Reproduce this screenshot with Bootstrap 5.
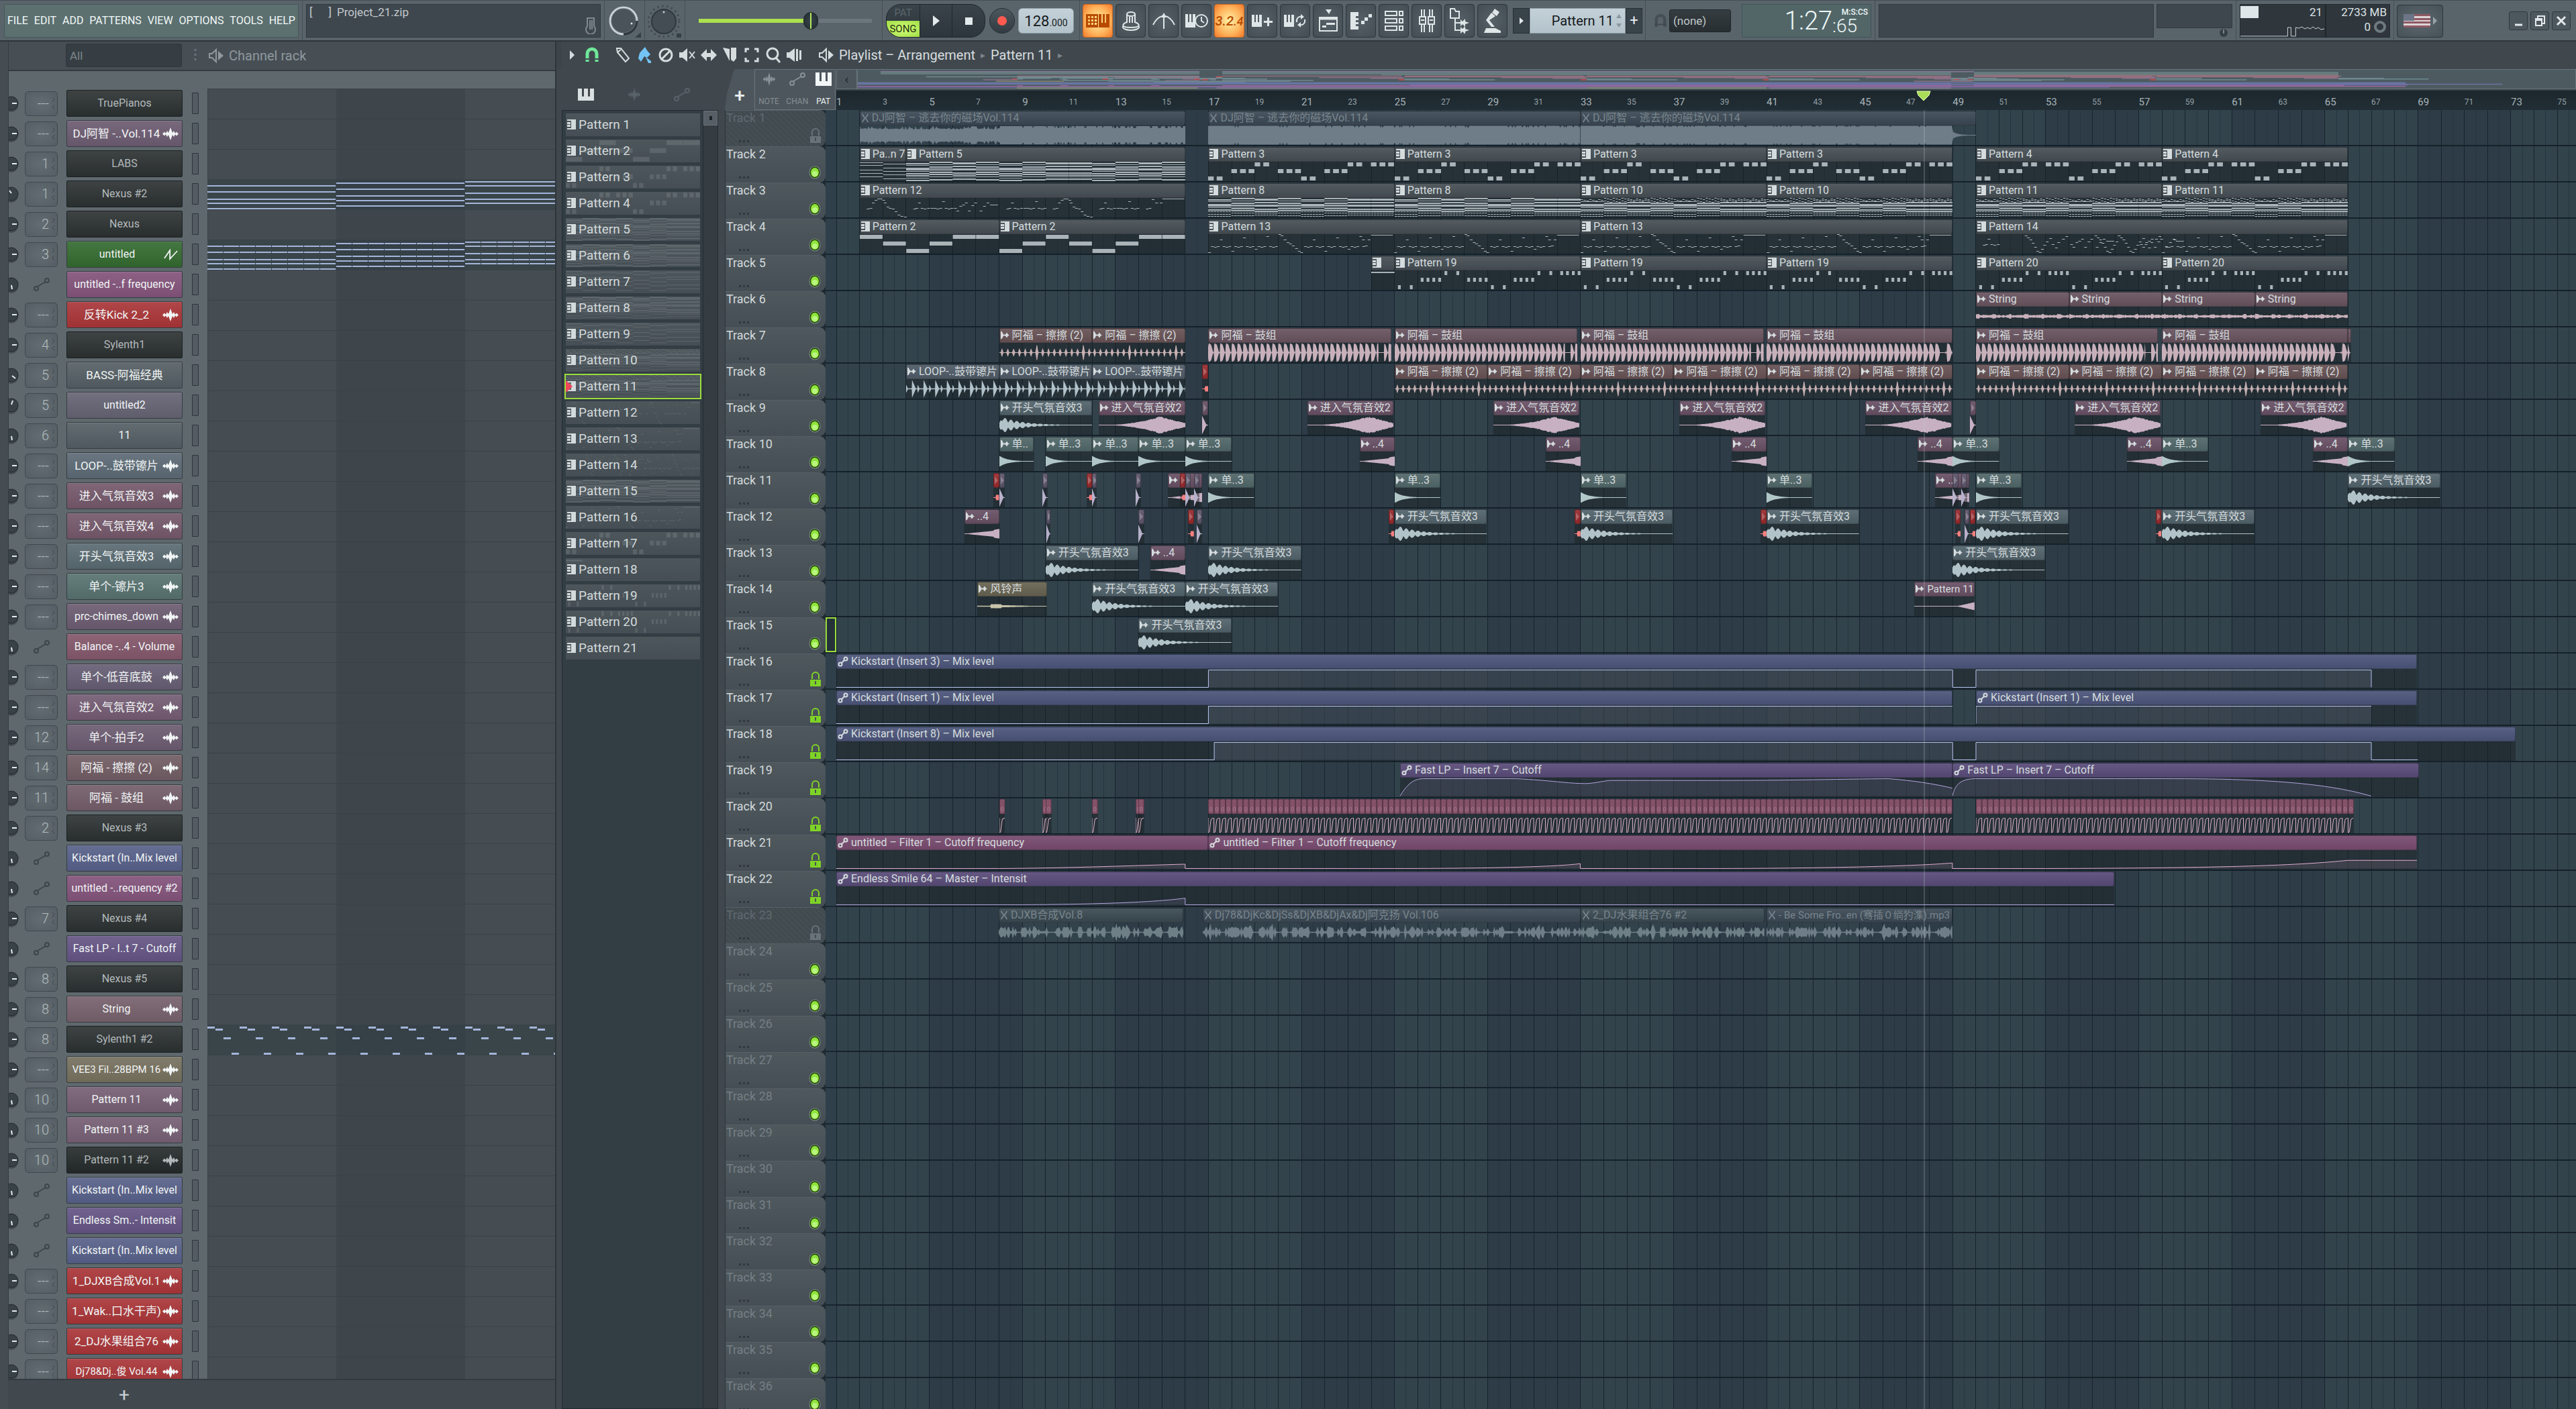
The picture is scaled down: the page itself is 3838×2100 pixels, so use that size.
<!DOCTYPE html>
<html lang="en">
<head>
<meta charset="utf-8">
<meta name="viewport" content="width=device-width, initial-scale=1">
<title>Project_21.zip</title>
<link href="https://cdn.jsdelivr.net/npm/bootstrap@5.3.0/dist/css/bootstrap.min.css" rel="stylesheet">
<style>
body{background:#40484e;color:#cfd6d9;font-family:Roboto,"Noto Sans CJK SC",sans-serif;font-size:16px;line-height:22px}
button,select,input{font-family:inherit}
button{border:0;padding:0;background:none;color:inherit}
svg{display:block;flex:none}
a{color:inherit;text-decoration:none}
/* toolbar */
.toolbar{height:62px;background:#59636a;border-top:1px solid #464e54;border-bottom:2px solid #2e363b;padding:5px 0 4px}
.tb-group{border-right:1px solid #474f56;padding:0 5px;margin:-5px 0 -4px;padding-top:5px;padding-bottom:4px;flex:none}
.tb-group:first-child{padding-left:6px}
.menu-box{width:439px;height:50px;background:#5c7070;border:1px solid #47575a;color:#f2f8f8;font-size:16px}
.well{height:50px;background:#3f474e;border:1px solid #31393f}
.hint-box{width:439px;font-size:17px;color:#c3cacd}
.w60{width:60px}
.vol-group{width:294px}
.vol{appearance:none;width:258px;height:26px;background:none}
.vol::-webkit-slider-runnable-track{height:6px;background:linear-gradient(90deg,#abe04f 64%,#6c757d 64%)}
.vol::-webkit-slider-thumb{appearance:none;width:22px;height:26px;margin-top:-10px;border-radius:11px;border:1px solid #20282c;background:linear-gradient(90deg,transparent 9px,#b5e85c 9px,#b5e85c 11px,transparent 11px),radial-gradient(#39454b,#1f292e)}
.pill{width:148px;height:50px;border-radius:22px;background:linear-gradient(#394349,#2c363b);border:1px solid #1f272b;overflow:hidden}
.pill>div,.pill>button{border-right:1px solid #20282c}
.pat-song{width:50px;font-size:15px;line-height:24px;text-align:center}
.pat-song .on{background:radial-gradient(#d5ff7a,#9fdc45);color:#22300c}
.pat-song .off{color:#5a666c}
.rec{width:38px;height:38px;border-radius:19px;background:linear-gradient(#4c575d,#313b41);border:1px solid #262f34}
.rec i{width:14px;height:14px;border-radius:7px;background:#ff5a4f}
.lcd{background:linear-gradient(#c4d1d9,#b3c2ca);color:#15191b;height:38px;border:1px solid #8c9aa2}
.tempo{width:83px;border-radius:6px;font-size:22px}
.tempo small{font-size:14px}
.tool{width:45px;height:50px;background:radial-gradient(#566067,#434d53);border:1px solid #2d363c;border-radius:4px;color:#dfe6e8}
.tool.hot{background:radial-gradient(#fff3a8,#ffb25a 60%,#f3772a);border-color:#d06a1c;color:#b84a00}
.tool-text{font-size:20px;font-style:italic;font-weight:500}
.side-btn{height:38px;background:#39434a;border:1px solid #262f34;width:25px;color:#e4eaec;font-size:22px}
.pat-lcd{width:143px;font-size:20px}
.dark-select{appearance:none;background:linear-gradient(#363d41,#272d30);border:1px solid #20272b;border-radius:3px;color:#c0c7ca;font-size:17px;padding:0 0 0 5px}
.sel-none{width:92px;height:34px}
.time-box{width:193px;height:50px;background:#526668;border:1px solid #42545a;color:#eef8f8;font-weight:300}
.time-box .big{font-size:38px;line-height:48px}
.time-box .sub{font-size:28px;line-height:28px}
.time-box .unit{font-size:12px;line-height:14px;font-weight:500}
.cpu{width:224px;height:50px;background:#2f373d;border:1px solid #232a2f;color:#dde3e5;font-size:17px}
.cpu-load{width:128px;border-right:2px solid #20272b}
.flag{width:69px;height:49px;background:radial-gradient(#5d686f,#465057);border:1px solid #2d363c;border-radius:4px}
.win{width:28px;height:28px;background:#4d575e;border:1px solid #2f383e;border-radius:3px;color:#e4eaec}
.win-group{width:271px}
/* channel rack */
.rack{width:829px;background:#454d53;border-right:2px solid #2e363b;padding-left:12px;flex:none}
.rack-head{height:44px;border-bottom:2px solid #343c42;border-left:1px solid #343c42;background:#474f55;color:#8f989d;font-size:20px}
.rack-all{width:173px;height:35px;margin-left:85px;background:#363e43;border-color:#2f363b;color:#7d878c}
.rack-body{background:#5f686d;border-left:1px solid #343c42;padding-top:26px;min-height:0;overflow:hidden}
.ch{height:45px}
.ch-num{width:49px;height:37px;border:1px solid #41494f;border-radius:5px;background:radial-gradient(#626c71,#545e64);color:#b4bcbf;font-size:20px;font-weight:300;padding-right:3px}
.ch-auto{width:49px;height:37px;color:#3d464b}
.ch-btn{width:173px;height:40px;margin:0 14px 0 13px;border:1px solid #353d42;border-radius:2px;color:#f1f5f5;font-size:16px;padding:0 5px;background-image:linear-gradient(rgba(255,255,255,.09),rgba(0,0,0,.05));box-shadow:inset 0 1px rgba(255,255,255,.12);white-space:nowrap}
.ch-btn.cjk{font-size:17px}
.ch-btn.fit{font-size:15px}
.ch-btn.dim{color:#b2b9bb;border-color:#1b2123;box-shadow:none}
.ch-led{width:10px;height:32px;border:1px solid #2d353a;background:#535c62;border-radius:1px}
.ch-grid{height:45px;margin-left:13px;border-top:1px solid #3a4248;background:linear-gradient(90deg,#454d53 192px,#3e464c 192px,#3e464c 384px,#454d53 384px);box-shadow:inset 1px 0 #3a4248}
.rack-foot{height:45px;border-top:2px solid #343c42;background:#41494f;font-size:28px;color:#c8ced1;font-weight:500}
.rack-foot button{width:174px;margin-left:86px}
/* playlist */
.pl-head{height:41px;color:#d7dddf;font-size:20px;border-left:8px solid #3d454b}
.pl-head .ti{width:24px;height:24px}
.crumb{color:#7c868b;font-size:14px}
.picker{width:251px;flex:none}
.picker-tabs{height:61px;color:#dbe1e3}
.faint{color:#596268}
.pat-list{margin-left:8px;width:233px;border:1px solid #232b30;background:#333d44;min-height:0;overflow:hidden}
.pat-items{gap:5px;padding:4px 4px 0 5px;width:210px;overflow:hidden}
.pat-item{height:34px;flex:none;background:linear-gradient(#4d565b,#454e54);font-size:19px;color:#d3dadc;text-align:left;padding-left:2px;gap:4px;overflow:hidden}
.pat-item.sel{outline:2px solid #9bdc3c;outline-offset:0}
.pat-item svg.pv{position:absolute;inset:0;width:100%;height:100%;opacity:.13;color:#dfe6e8}
.pat-scroll{width:22px;border-left:1px solid #232b30;background:repeating-conic-gradient(#394147 0 25%,#30383e 0 50%) 0 0/4px 4px}
.pat-scroll div{height:22px;background:#555f65;border:1px solid #6a747a;color:#1c2327}
.corner{width:166px;height:61px;flex:none}
.add-tab{width:44px;background:#4d565c;clip-path:polygon(14px 0,100% 0,100% 100%,0 100%,3px 60%);font-size:28px;font-weight:500;color:#e8edef;padding-top:20px}
.modes{width:121px;background:#4d565c;border:1px solid #6a747a;font-size:12px;line-height:14px;color:#869095}
.modes .on{color:#f2f6f7}
.overview{height:30px;background:#4d5b61;border:1px solid #68737a}
.ov-btn{width:31px;background:#4b555b;border:1px solid #68737a;color:#1b2327;font-size:18px}
.ruler{height:31px;background:linear-gradient(#1c272d,#222e35);border-top:2px solid #37434a;color:#94a0a6;font-size:12px}
.ruler span{position:absolute;bottom:3px;line-height:18px}
.ruler .major{font-size:15px;color:#a9b4b9}
.tracks{min-height:0;overflow:hidden;background:#1d2a32}
.trk{height:54px;position:relative}
.trk-head{width:150px;height:54px;flex:none;background:linear-gradient(#4f585d,#454e54);border-radius:0 9px 9px 0;border-top:1px solid #565f65;border-left:1px solid #2d353a;padding:0 8px 0 1px;font-size:18px;color:#d3dadc;position:relative}
.trk-head.idle{color:#747f85}
.trk-head.off{color:#5f696f;background:repeating-linear-gradient(45deg,#454e53 0 3px,#414a4f 3px 6px)}
.trk-head .dots{position:absolute;left:20px;bottom:6px}
.trk-head .st{position:absolute;right:7px;bottom:5px}
.lead-in{width:16px;flex:none;border-bottom:2px solid #1a262d;background:#30404a}
.lead-in.mark{border:2px solid #9bdc3c;background:#25323a;margin-bottom:2px}
.lane{position:relative;min-width:0;border-bottom:2px solid #15212a}
.grid-svg{position:absolute;left:166px;top:0;height:1944px;width:calc(100% - 166px)}
.clip{position:absolute;top:1px;bottom:0;overflow:hidden}
.clip-head{height:22px;border-radius:3px;border:1px solid rgba(0,0,0,.3);background-image:linear-gradient(rgba(255,255,255,.08),rgba(0,0,0,.06));padding-left:1px;gap:4px;white-space:nowrap;overflow:hidden;color:#d5dcde}
.clip-name{font-size:16px;line-height:20px}
.clip-name.fit{font-size:15px}
.clip svg.body{width:100%;height:29px;background:rgba(26,32,36,.5);position:absolute;left:0;bottom:0}
.clip.ghost .clip-head{color:#78858d}
.clip.ghost svg.body{background:none}
.playhead{position:absolute;top:0;bottom:0;width:2px;background:rgba(190,205,210,.22)}
</style>
<script src="https://cdn.jsdelivr.net/npm/bootstrap@5.3.0/dist/js/bootstrap.bundle.min.js"></script>
</head>
<body class="d-flex flex-column vh-100 overflow-hidden">

<svg width="0" height="0" class="position-absolute">
<defs>
<symbol id="pat" viewBox="0 0 13 15"><path fill="currentColor" d="M8 0h5v15H8zM0 0h8v2H0zM0 4h5v3H0zM0 8h5v3H0zM0 13h8v2H0zM6 0h3v15H6z"/></symbol>
<symbol id="wave" viewBox="0 0 24 26"><path fill="currentColor" d="M0 13l3-4 2 3 2-5 2 4 3-11 3 11 2-4 2 5 2-3 3 4-3 4-2-3-2 5-2-4-3 11-3-11-2 4-2-5-2 3z"/></symbol>
<symbol id="aud" viewBox="0 0 13 14"><path fill="currentColor" d="M0 1l2 1 2 4h3l2-3 2 3 2 1-2 1-2 3-2-3H4l-2 4-2 1z"/></symbol>
<symbol id="auto" viewBox="0 0 24 20"><g fill="none" stroke="currentColor" stroke-width="2"><circle cx="4" cy="16" r="3"/><circle cx="20" cy="4" r="3"/><path d="M6 13L18 6"/></g></symbol>
<symbol id="autos" viewBox="0 0 16 16"><g fill="none" stroke="currentColor" stroke-width="2"><circle cx="4" cy="12" r="2.5"/><circle cx="12" cy="4" r="2.5"/><path d="M6 10l4-4"/></g></symbol>
<symbol id="cut" viewBox="0 0 12 16"><path fill="none" stroke="currentColor" stroke-width="2" d="M1 1l3 5 4 4 3 5M11 1L8 6l-4 4-3 5"/></symbol>
<symbol id="spk" viewBox="0 0 22 24"><path fill="none" stroke="currentColor" stroke-width="2" d="M1 9v6h4l6 6V3L5 9z"/><path fill="currentColor" d="M14 5l8 7-8 7z"/></symbol>
<symbol id="saw" viewBox="0 0 24 18"><path fill="none" stroke="currentColor" stroke-width="2" d="M1 15L10 2v14L22 3"/></symbol>
<symbol id="lock" viewBox="0 0 16 22"><path fill="none" stroke="currentColor" stroke-width="2" d="M3 11V6a5 5 0 0110 0v5"/><path fill="currentColor" fill-rule="evenodd" d="M0 12h16v10H0zM7 14v5h2v-5z"/></symbol>
<symbol id="led" viewBox="0 0 18 20"><ellipse cx="9" cy="10" rx="8.5" ry="9.5" fill="#7f9186"/><ellipse cx="9" cy="10" rx="7.5" ry="8.5" fill="#1f4207"/><ellipse cx="9" cy="10" rx="6" ry="7" fill="#8fe43c"/><ellipse cx="9" cy="12" rx="4" ry="4" fill="#b9f57f"/></symbol>
<symbol id="magnet" viewBox="0 0 20 24"><path fill="none" stroke="currentColor" stroke-width="5" d="M3 22V10a7 7 0 0114 0v12"/><path stroke="#40484e" stroke-width="2" d="M0 18h20"/></symbol>
</defs>
</svg>

<header class="toolbar d-flex">
  <div class="tb-group">
    <nav class="menu-box d-flex align-items-center justify-content-between px-1" aria-label="Main menu">
      <a href="#">FILE</a><a href="#">EDIT</a><a href="#">ADD</a><a href="#">PATTERNS</a><a href="#">VIEW</a><a href="#">OPTIONS</a><a href="#">TOOLS</a><a href="#">HELP</a>
    </nav>
  </div>
  <div class="tb-group">
    <div class="well hint-box d-flex justify-content-between ps-1 pe-1">
      <div class="d-flex gap-2"><span class="d-flex gap-4"><span>[</span><span>]</span></span><span>Project_21.zip</span></div>
      <svg class="align-self-end mb-1" width="20" height="26" viewBox="0 0 20 26" fill="none" stroke="#7f898e" stroke-width="2"><path d="M5 14V2h10v12a7 7 0 11-10 0zM9 5v14M12 5v14"/></svg>
    </div>
  </div>
  <div class="tb-group w60 px-1">
    <svg width="50" height="50" viewBox="0 0 50 50"><circle cx="24" cy="25" r="20" fill="none" stroke="#2f383d" stroke-width="3"/><path d="M44 25A20 20 0 1024 45" fill="none" stroke="#c9d2d6" stroke-width="3"/><circle cx="24" cy="25" r="17" fill="#4a5359"/><circle cx="36" cy="29" r="1.5" fill="#dfe6e8"/><path d="M50 42v8h-9z" fill="#353e43"/></svg>
  </div>
  <div class="tb-group w60 px-1">
    <svg width="50" height="50" viewBox="0 0 50 50"><circle cx="24" cy="26" r="23" fill="none" stroke="#3c454a" stroke-width="3" stroke-dasharray="2 5"/><circle cx="24" cy="26" r="18" fill="#444d53" stroke="#2f383d" stroke-width="2"/><circle cx="24" cy="12" r="1.5" fill="#c9d2d6"/><path d="M43 44h7v6h-7z" fill="#353e43"/></svg>
  </div>
  <div class="tb-group vol-group d-flex align-items-center ps-3">
    <input type="range" class="vol ms-1" min="0" max="100" value="66" aria-label="Main volume">
  </div>
  <div class="tb-group vol-group d-flex align-items-center justify-content-between pe-2">
    <div class="pill d-flex">
      <div class="pat-song"><button class="d-block w-100 off">PAT</button><button class="d-block w-100 on">SONG</button></div>
      <button class="flex-fill d-flex align-items-center justify-content-center" aria-label="Play"><svg width="10" height="16" viewBox="0 0 10 16"><path fill="#e3eaec" d="M0 0l10 8-10 8z"/></svg></button>
      <button class="flex-fill d-flex align-items-center justify-content-center border-0" aria-label="Stop"><svg width="11" height="11"><path fill="#e3eaec" d="M0 0h11v11H0z"/></svg></button>
    </div>
    <button class="rec d-flex align-items-center justify-content-center" aria-label="Record"><i></i></button>
    <div class="lcd tempo d-flex align-items-baseline justify-content-center pt-2"><span>128</span><small>.000</small></div>
  </div>
  <div class="tb-group d-flex align-items-center gap-1 px-1 pe-1">
    <button class="tool hot d-flex align-items-center justify-content-center" aria-label="Typing keyboard"><svg width="35" height="20" viewBox="0 0 35 20"><path fill="currentColor" fill-rule="evenodd" d="M0 0h18v20H0zM3 3v3h3V3zM8 3v3h3V3zM13 3v3h3V3zM3 8v3h3V8zM8 8v3h3V8zM13 8v3h3V8zM3 13v3h3v-3zM8 13v3h3v-3zM13 13v3h3v-3z"/><path fill="currentColor" d="M19 0h4v13h2V0h3v13h2V0h5v20H19z"/></svg></button>
    <button class="tool d-flex align-items-center justify-content-center" aria-label="Wait for input"><svg width="28" height="30" viewBox="0 0 28 30" fill="none" stroke="currentColor" stroke-width="2"><ellipse cx="14" cy="5" rx="6" ry="3"/><path d="M8 5v13M20 5v13M12 9v9M16 9v9"/><path d="M8 17c-8 3-9 8 6 8s14-5 6-8"/><path d="M2 23c-2 8 26 8 24 0"/></svg></button>
    <button class="tool d-flex align-items-center justify-content-center" aria-label="Countdown"><svg width="34" height="24" viewBox="0 0 34 24" fill="none" stroke="currentColor" stroke-width="2"><path d="M17 24V6M1 18C5 10 10 6 15 5M33 18C29 10 24 6 19 5"/><path fill="currentColor" stroke="none" d="M13 7l4-7 4 7z"/></svg></button>
    <button class="tool d-flex align-items-center justify-content-center" aria-label="Overdub"><svg width="34" height="24" viewBox="0 0 34 24"><path fill="currentColor" d="M0 2h4v12h2V2h3v12h2V2h4v20H0z"/><circle cx="24" cy="12" r="9" fill="#4d575e" stroke="currentColor" stroke-width="2"/><path d="M24 6v6l4 3" fill="none" stroke="currentColor" stroke-width="2"/></svg></button>
    <button class="tool hot tool-text" aria-label="Loop record">3.2<small>.4</small></button>
    <button class="tool d-flex align-items-center justify-content-center" aria-label="Step edit"><svg width="32" height="22" viewBox="0 0 32 22"><path fill="currentColor" d="M0 2h4v11h2V2h3v11h2V2h4v18H0zM18 11h5V6h3v5h5v3h-5v5h-3v-5h-5z"/></svg></button>
    <button class="tool d-flex align-items-center justify-content-center" aria-label="Blend notes"><svg width="34" height="22" viewBox="0 0 34 22"><path fill="currentColor" d="M0 2h4v11h2V2h3v11h2V2h4v18H0z"/><path fill="none" stroke="currentColor" stroke-width="2" d="M19 13c-1-6 3-9 8-8M31 9c1 6-3 9-8 8"/><path fill="currentColor" d="M25 1l5 4-5 4zM25 13l-5 4 5 4z"/></svg></button>
    <button class="tool d-flex align-items-center justify-content-center" aria-label="Playlist"><svg width="28" height="34" viewBox="0 0 28 34"><path fill="currentColor" d="M10 0h9l-4 7zM5 27h6v-3H5zM11 23h6v-3h-6zM17 23h7v-3h-7z"/><path fill="none" stroke="currentColor" stroke-width="2" d="M1 12h26v20H1z"/><path stroke="currentColor" stroke-width="3" d="M1 14h26"/></svg></button>
    <button class="tool d-flex align-items-center justify-content-center" aria-label="Piano roll"><svg width="32" height="26" viewBox="0 0 32 26"><path fill="currentColor" d="M0 0h12v6H8v3h4v3H8v3h4v3H8v3h4v5H0zM16 13h5v5h-5zM21 8h5v5h-5zM27 3h5v5h-5z"/></svg></button>
    <button class="tool d-flex align-items-center justify-content-center" aria-label="Channel rack"><svg width="28" height="30" viewBox="0 0 28 30" fill="none" stroke="currentColor" stroke-width="2"><path d="M1 1h17v6H1zM22 1h5v6h-5zM1 12h17v6H1zM22 12h5v6h-5zM1 23h17v6H1zM22 23h5v6h-5z"/></svg></button>
    <button class="tool d-flex align-items-center justify-content-center" aria-label="Mixer"><svg width="24" height="36" viewBox="0 0 24 36" fill="none" stroke="currentColor" stroke-width="2"><path d="M4 1v11M8 1v11M16 1v11M20 1v11M4 24v11M8 24v11M16 24v11M20 24v11M1 12h9v11H1zM14 12h9v11h-9zM3 17h5M16 17h5"/></svg></button>
    <button class="tool d-flex align-items-center justify-content-center" aria-label="Browser"><svg width="30" height="38" viewBox="0 0 30 38" fill="none" stroke="currentColor" stroke-width="2"><path d="M1 1h6l2 4h5v10H1zM8 15v18h8M8 22h8"/><path fill="currentColor" stroke="none" d="M16 17l3 3 4-4v4l6 2-6 2v4l-4-4-3 3zM16 28l3 3 4-4v4l6 2-6 2v4l-4-4-3 3z"/></svg></button>
    <button class="tool d-flex align-items-center justify-content-center" aria-label="Plugin picker"><svg width="28" height="36" viewBox="0 0 28 36"><path fill="currentColor" d="M17 0l7 5-4 6-7-5zM12 6l6 5-9 6 8 10h-5L4 17zM1 36l3-7h14l8 4v3z"/></svg></button>
    <div class="d-flex ps-1">
      <button class="side-btn d-flex align-items-center justify-content-center" aria-label="Previous pattern"><svg width="6" height="10"><path fill="#e4eaec" d="M0 0l6 5-6 5z"/></svg></button>
      <button class="lcd pat-lcd d-flex align-items-center justify-content-end pe-1 gap-1">Pattern 11 <svg width="9" height="20" viewBox="0 0 9 20"><path fill="#8b979d" d="M4 0l4 6H0zM4 20l4-6H0z"/></svg></button>
      <button class="side-btn" aria-label="Add pattern">+</button>
    </div>
  </div>
  <div class="tb-group d-flex align-items-center">
    <svg class="ms-2" width="18" height="22" style="color:#454e54"><use href="#magnet"/></svg>
    <select class="dark-select sel-none ms-1 me-3" aria-label="Snap"><option>(none)</option></select>
    <div class="time-box d-flex justify-content-end pe-1">
      <span class="big">1:27</span>
      <span class="d-flex flex-column align-items-end pt-1"><span class="unit">M:S:CS</span><span class="sub me-3">:65</span></span>
    </div>
  </div>
  <div class="tb-group d-flex flex-fill gap-1">
    <div class="well" style="flex:18 1 0"></div>
    <div class="d-flex flex-column align-items-end" style="flex:5 1 0">
      <div class="well w-100 h-75"></div>
      <svg class="me-1" width="18" height="14" viewBox="0 0 18 14"><circle cx="9" cy="7" r="6" fill="#353e43"/><path d="M9 2v6" stroke="#79838a" stroke-width="2"/></svg>
    </div>
  </div>
  <div class="tb-group">
    <div class="cpu d-flex">
      <div class="d-flex flex-column cpu-load">
        <div class="d-flex justify-content-between"><svg width="27" height="20"><path fill="#dfe6e9" d="M0 2h27v18H0z"/></svg><span class="pe-1">21</span></div>
        <svg width="126" height="26" viewBox="0 0 127 26"><path fill="none" stroke="#cfd6d8" stroke-width="1" d="M0 25h71v-13h5v13h7v-13l5 1 4-2 5 3 4-2 4 2 4-3 4 3 4-2 4 3 5-1"/></svg>
      </div>
      <div class="d-flex flex-column flex-fill align-items-end pe-1">
        <span>2733 MB</span>
        <div class="d-flex align-items-center gap-1"><span>0</span><svg width="20" height="20" viewBox="0 0 20 20"><circle cx="10" cy="10" r="7" fill="none" stroke="#6f7a80" stroke-width="4"/></svg></div>
      </div>
    </div>
  </div>
  <div class="d-flex align-items-center justify-content-between win-group ps-1 pe-2">
    <button class="flag d-flex align-items-center justify-content-center gap-1" aria-label="Language">
      <svg width="40" height="20" viewBox="0 0 40 20"><path fill="#ddd3d6" d="M0 0h40v20H0z"/><path fill="#8e5964" d="M0 0h40v3H0zM0 6h40v3H0zM0 11h40v3H0zM0 17h40v3H0z"/><path fill="#6d7688" d="M0 0h16v10H0z"/></svg>
      <svg width="6" height="12"><path fill="#97a1a6" d="M0 0l6 6-6 6z"/></svg>
    </button>
    <div class="d-flex gap-1">
      <button class="win" aria-label="Minimise"><svg width="26" height="26"><path stroke="#e4eaec" stroke-width="3" d="M8 19h11"/></svg></button>
      <button class="win" aria-label="Restore"><svg width="26" height="26" fill="none" stroke="#e4eaec" stroke-width="2"><path d="M10 9V6h10v11h-3M7 10h9v10H7zM7 12h9"/></svg></button>
      <button class="win" aria-label="Close"><svg width="26" height="26" stroke="#e4eaec" stroke-width="3"><path d="M7 7l12 12M19 7L7 19"/></svg></button>
    </div>
  </div>
</header>

<main class="d-flex flex-grow-1" style="min-height:0">
  <section class="rack d-flex flex-column" aria-label="Channel rack">
    <div class="rack-head d-flex align-items-center">
      <select class="dark-select rack-all" aria-label="Channel filter"><option>All</option></select>
      <svg class="ms-3" width="8" height="20"><path stroke="#6a747a" stroke-width="3" stroke-dasharray="3 4" d="M4 0v20"/></svg>
      <svg class="ms-3 me-2" width="22" height="24"><use href="#spk"/></svg>
      <span>Channel rack</span>
    </div>
    <div class="rack-body flex-grow-1" id="channels"></div>
    <div class="rack-foot d-flex"><button aria-label="Add channel">+</button></div>
  </section>

  <section class="d-flex flex-column flex-grow-1" style="min-width:0" aria-label="Playlist">
    <div class="pl-head d-flex align-items-center gap-2 ps-2">
      <svg class="ms-1" width="7" height="14"><path fill="currentColor" d="M0 0l7 7-7 7z"/></svg>
      <svg class="ms-2 me-3" width="20" height="24" style="color:#6fe79a"><use href="#magnet"/></svg>
      <svg class="ti" viewBox="0 0 24 24" fill="none" stroke="currentColor" stroke-width="2"><path d="M3 2h6l12 15-5 5L4 8zM4 8l5-4"/></svg>
      <svg class="ti" viewBox="0 0 24 24" fill="#74c3f5"><path d="M5 9l8-9 3 5 5 6-5 5-4-2-5 8-4-5zM14 15l8 6v3h-4z"/></svg>
      <svg class="ti" viewBox="0 0 24 24" fill="none" stroke="currentColor" stroke-width="3"><circle cx="12" cy="12" r="9"/><path d="M6 18L18 6"/></svg>
      <svg class="ti" viewBox="0 0 24 24"><path fill="currentColor" d="M0 8h5l7-6v20l-7-6H0z"/><path stroke="currentColor" stroke-width="2" d="M15 7l8 10M23 7l-8 10"/></svg>
      <svg class="ti" viewBox="0 0 24 24" fill="currentColor"><path d="M0 12l9-9v6h6V3l9 9-9 9v-6H9v6z"/></svg>
      <svg class="ti" viewBox="0 0 24 24" fill="currentColor"><path d="M1 1l10 2v18zM13 1h8v16l-4 5-4-3z"/></svg>
      <svg class="ti" viewBox="0 0 24 24" fill="none" stroke="currentColor" stroke-width="3"><path d="M8 3H3v5M16 3h5v5M8 21H3v-5M16 21h5v-5"/></svg>
      <svg class="ti" viewBox="0 0 24 24" fill="none" stroke="currentColor" stroke-width="3"><circle cx="11" cy="10" r="8"/><path d="M16 16l6 7"/></svg>
      <svg class="ti" viewBox="0 0 24 24" fill="currentColor"><path d="M0 8h4l8-6v20l-8-6H0zM14 3h3v18h-3zM19 5h3v14h-3z"/></svg>
      <svg class="ms-3" width="22" height="24"><use href="#spk"/></svg>
      <span>Playlist – Arrangement</span><span class="crumb">▸</span><span>Pattern 11</span><span class="crumb">▸</span>
    </div>

    <div class="d-flex flex-grow-1" style="min-height:0">
      <div class="picker d-flex flex-column">
        <div class="picker-tabs d-flex align-items-center justify-content-between ps-4 pe-5 pt-3">
          <svg class="ms-2" width="24" height="18" viewBox="0 0 16 20" preserveAspectRatio="none"><path fill="currentColor" d="M0 0h4v13h2V0h4v13h2V0h4v20H0z"/></svg>
          <svg class="faint" width="30" height="20"><use href="#wave"/></svg>
          <svg class="faint me-1" width="24" height="20"><use href="#auto"/></svg>
        </div>
        <div class="pat-list flex-grow-1 d-flex">
          <div class="pat-items d-flex flex-column" id="patterns"></div>
          <div class="pat-scroll"><div class="d-flex align-items-center justify-content-center"><svg width="4" height="6"><path fill="currentColor" d="M0 0h4v6H0z"/></svg></div></div>
        </div>
      </div>

      <div class="d-flex flex-column flex-grow-1" style="min-width:0">
        <div class="d-flex">
          <div class="corner d-flex">
            <button class="add-tab" aria-label="Add track">+</button>
            <div class="modes d-flex align-items-center justify-content-around">
              <button><svg class="mx-auto mb-3" width="30" height="20"><use href="#wave"/></svg>NOTE</button>
              <button><svg class="mx-auto mb-3" width="24" height="20"><use href="#auto"/></svg>CHAN</button>
              <button class="on"><svg class="mx-auto mb-3" width="24" height="20" viewBox="0 0 16 20" preserveAspectRatio="none"><path fill="currentColor" d="M0 0h4v13h2V0h4v13h2V0h4v20H0z"/></svg>PAT</button>
            </div>
          </div>
          <div class="flex-grow-1 d-flex flex-column" style="min-width:0">
            <div class="d-flex"><button class="ov-btn" aria-label="Scroll left">‹</button><div class="overview flex-grow-1"><svg id="overview" width="100%" height="28" viewBox="0 0 754 28" preserveAspectRatio="none"></svg></div></div>
            <div class="ruler position-relative overflow-hidden" id="ruler"></div>
          </div>
        </div>
        <div class="tracks flex-grow-1 position-relative" id="tracks">
          <svg class="grid-svg" id="grid" viewBox="0 0 748 1944" preserveAspectRatio="none" shape-rendering="crispEdges"></svg>
        </div>
      </div>
    </div>
  </section>
</main>

<script>
const BARS = 74.8;
const pct = v => (v / BARS * 100).toFixed(3) + '%';
const isCjk = s => /[\u3000-\u9fff\uff00-\uffef]/.test(s);
const esc = s => s.replace(/&/g, '&amp;');
let seed = 7;
const rnd = () => (seed = (seed * 16807) % 2147483647) / 2147483647;

/* ---------- channel rack ---------- */
const K = '#2b3031', PU = '#6b5a70', MG = '#82527a', RD = '#a83437', GY = '#535d63', BL = '#565f88', VI = '#635383', MV = '#75606b';
const channels = [
 ['---','TruePianos',K],['---','DJ阿智 -..Vol.114',PU,'w'],['1','LABS',K],['1','Nexus #2',K],['2','Nexus',K],['3','untitled','#33692f','s'],
 ['a','untitled -..f frequency',MG],['---','反转Kick 2_2',RD,'w'],['4','Sylenth1',K],['5','BASS-阿福经典',GY],['5','untitled2','#646272'],['6','11',GY],
 ['---','LOOP-..鼓带镲片','#5b6974','w'],['---','进入气氛音效3','#735769','w'],['---','进入气氛音效4','#735769','w'],['---','开头气氛音效3','#586970','w'],
 ['---','单个-镲片3','#56706e','w'],['---','prc-chimes_down','#6b5a70','w'],['a','Balance -..4 - Volume','#82566a'],['---','单个-低音底鼓','#655c72','w'],
 ['---','进入气氛音效2','#735b72','w'],['12','单个-拍手2','#6b5a70','w'],['14','阿福 - 擦擦 (2)','#705b62','w'],['11','阿福 - 鼓组','#725c68','w'],['2','Nexus #3',K],
 ['a','Kickstart (In..Mix level',BL],['a','untitled -..requency #2',MG],['7','Nexus #4',K],['a','Fast LP - I..t 7 - Cutoff',VI],['8','Nexus #5',K],
 ['8','String',MV,'w'],['8','Sylenth1 #2',K],['---','VEE3 Fil..28BPM 16','#756f5d','w'],['10','Pattern 11','#755e73','w'],['10','Pattern 11 #3','#755e73','w'],
 ['10','Pattern 11 #2','#242929','w'],['a','Kickstart (In..Mix level',BL],['a','Endless Sm..- Intensit',VI],['a','Kickstart (In..Mix level',BL],
 ['---','1_DJXB合成Vol.1',RD,'w'],['---','1_Wak..口水干声)',RD,'w'],['---','2_DJ水果组合76',RD,'w'],['---','Dj78&Dj..俊 Vol.44',RD,'w']];
const chordRows = [[8,17,28,34,42],[4,13,23,30,38],[2,8,19,28,34]];
function gridNotes(i) {
  let r = '';
  const bg = '<rect width="519" height="45" fill="#3a454a"/><rect x="192" width="192" height="45" fill="#354047"/>';
  if (i === 3 || i === 5) {
    chordRows.forEach((ys, b) => ys.forEach(y => {
      if (i === 3) r += `<rect x="${b*192}" y="${y}" width="191" height="2"/>`;
      else for (let k = 0; k < 8; k++) r += `<rect x="${b*192+k*24}" y="${y}" width="23" height="2"/>`;
    }));
  } else if (i === 31) {
    for (let k = 0; k < 11; k++) [[0,2],[12,5],[24,18],[36,41]].forEach(([x,y]) => r += `<rect x="${k*48+x}" y="${y}" width="11" height="3"/>`);
  } else return '';
  return `<svg width="100%" height="44" fill="#a4b5d9">${bg}${r}</svg>`;
}
document.getElementById('channels').innerHTML = channels.map(([n, name, col, ic], i) => {
  const a = n === 'a' || i === 11 || i === 33 || i === 34;
  const hand = a ? 'M4 19l1 6' : i === 3 ? 'M1 13l3 4' : i === 9 ? 'M5 19l5 4' : i === 10 ? 'M4 17l2-6' : 'M5 18h7';
  const num = n === 'a'
    ? '<div class="ch-auto d-flex align-items-center justify-content-center"><svg width="24" height="20"><use href="#auto"/></svg></div>'
    : `<button class="ch-num d-flex align-items-center justify-content-end gap-1" aria-label="Mixer track ${i+1}">${n}<svg width="5" height="20" fill="none" stroke="#3f484d"><path d="M1 1l3 3-3 4M4 12l-3 3 3 4"/></svg></button>`;
  const icon = ic === 'w' ? '<svg width="24" height="19" viewBox="0 0 24 26" preserveAspectRatio="none"><use href="#wave" width="24" height="26"/></svg>' : ic === 's' ? '<svg width="22" height="17"><use href="#saw"/></svg>' : '';
  const dim = col === K || i === 35 ? ' dim' : '';
  const size = ic && name.length > 16 ? ' fit' : isCjk(name) ? ' cjk' : '';
  return `<div class="ch d-flex align-items-center"><svg width="24" height="36"><circle cx="4" cy="21" r="10" fill="#454e52"/><circle cx="4" cy="18" r="10" fill="#384247" stroke="#22292d"/><path d="${hand}" stroke="#e6ecee" stroke-width="2"/></svg>${num}
  <button class="ch-btn${dim}${size} d-flex align-items-center" style="background-color:${col}"><span class="flex-fill text-center">${esc(name)}</span>${icon}</button><span class="ch-led"></span><div class="ch-grid flex-grow-1">${gridNotes(i)}</div></div>`;
}).join('');

/* ---------- note drawings: x in bars (1 bar = 35 units), y 0..29 ---------- */
const rect = (x, y, w, h) => `<rect x="${(x*35).toFixed(1)}" y="${y}" width="${(w*35).toFixed(1)}" height="${h}"/>`;
const LV = [1, 11, 22];
function levels(list, xs) {
  return list.map((l, b) => xs(l, b).map(([x, w]) => rect(b + x, LV[l], w, 6)).join('')).join('');
}
const two = [[0,.24],[.37,.25]], three = [[0,.24],[.37,.25],[.74,.25]];
const d2 = [[.14,.12],[.65,.12]], d4 = [[.12,.12],[.37,.12],[.62,.12],[.87,.12]];
const BARLINES = [[2,5,9,11,14,17,20,24,27],[0,4,7,10,13,15,18,22,26],[1,3,6,10,12,16,19,22,25]];
const SPARSE = [[1,5,12,17,22],[3,9,14,19,25],[2,8,11,18,23]];
function chords(len, dense, dots) {
  let r = '';
  for (let b = 0; b < len; b++) {
    const set = (dense ? BARLINES : SPARSE)[[0, 1, 2, 1, 0, 1, 2, 2][b % 8]];
    set.forEach((y, i) => {
      if (dots && (y > 19 || (dots > 1 && y < 5))) for (let k = 0; k < 8; k++) r += rect(b + k / 8, y + (y < 5 ? k % 3 : 0), .1, 1);
      else r += rect(b, y, 1, dense && i % 3 !== 1 ? 2 : 1);
    });
  }
  return r;
}
const riff = [[.3,16],[.4,15],[.5,7],[.62,15],[.75,16],[.9,15],[1.05,15],[1.18,15],[1.3,16],[1.42,15],[1.54,5],[1.65,15],[1.78,16],[1.9,15]];
const fall = [[.3,16],[.42,15],[.52,7],[.64,3],[.75,1],[.86,1],[.97,3],[1.03,7],[1.15,13],[1.25,15],[1.38,16],[1.5,20],[1.63,25],[1.75,27],[1.9,28]];
const jig = [[.05,15],[.15,19],[.28,12],[.4,10],[.52,7],[.65,19],[.8,11],[.92,7],[1.15,19],[1.3,12],[1.45,7],[1.6,10],[1.7,10],[1.82,10]];
const zig = [[.1,2],[.2,5],[.3,8],[.4,13],[.5,19],[.6,25],[.7,27],[.8,22],[.9,16],[1,11],[1.15,6],[1.25,15],[1.4,20],[1.5,12],[1.7,7],[1.85,3]];
const put = (pts, at) => pts.map(([x, y]) => rect(at + x, y, .12, 1)).join('');
function mel13(at) {
  let p = [[.5,8],[1.5,5],[2.5,3],[3.02,0],[3.12,2],[3.25,8],[3.38,12],[3.48,14],[3.6,17],[3.74,21],[3.86,25],[3.96,27],[1,25],[2,22],[0,27],[4.5,8],[5.5,5],[5,25],[6,22],[6.5,3],[6.62,8],[6.86,8],[6.74,17]];
  for (let k = 1; k < 24; k++) if (k % 4) p.push([k * .125, k % 4 === 2 ? 19 : 18]);
  for (let k = 33; k < 54; k++) if (k % 4) p.push([k * .125, k % 4 === 2 ? 19 : 18]);
  return put(p, at) + rect(at + 7, 1, .94, 1);
}
const notes = {
  p2a: () => levels([0,1,2,1,0,0], () => [[0,.98]]),
  p2: () => levels([2,1,0,1,2,1,0,0], () => [[0,.98]]),
  p3: () => levels([2,1,0,1,2,1,0,0], (l, b) => l === 1 || b === 7 ? three : two),
  p4: () => levels([2,1,0,0,2,1,0,0], (l, b) => l === 1 || b % 4 === 3 ? three : two),
  p19: () => levels([2,1,0,1,2,1,0,0], (l, b) => l === 1 || b === 7 ? d4 : d2),
  p20: () => levels([2,1,0,0,2,1,0,0], (l, b) => l === 1 || b % 4 === 3 ? d4 : d2),
  p18: () => rect(0, 2, 1, 2),
  p7: n => chords(n, false), p5: n => chords(n, true), p8: n => chords(n, true, 1), p10: n => chords(n, true, 2),
  p12: () => put(fall,0)+put(riff,2)+put(jig,4)+put(riff,6)+put(fall,8)+put(riff,10)+put([[.3,16],[.42,15],[.55,2],[.7,7],[.9,7]],12)+rect(13,1,.95,1),
  p13: n => { let r = ''; for (let b = 0; b < n; b += 8) r += mel13(b); return r; },
  p14: () => put(riff.slice(0,6),0)+put(zig,2)+put(jig,4)+put(zig.slice(0,10),5)+put(zig,6)+put(jig,7)+mel13(8)
};

/* ---------- waveforms: mirrored envelope ---------- */
function wave(len, env, n) {
  const w = len * 35, N = Math.round(n || Math.max(8, w / 1.5));
  let up = '', dn = '';
  for (let i = 0; i <= N; i++) {
    const t = i / N, a = Math.max(.02, Math.min(1, env(t * len, t))) * 14;
    up += `${(t*w).toFixed(1)},${(14.5-a).toFixed(1)} `;
    dn = `${(t*w).toFixed(1)},${(14.5+a).toFixed(1)} ` + dn;
  }
  return `<polygon points="${up}${dn}"/>`;
}
const mid = len => `<rect y="14" width="${len*35}" height="1"/>`;
const frac = (x, p) => (x % p) / p;
const waves = {
  full1: n => wave(n, x => x < 6 ? (rnd() < .15 ? .95 : .6 + rnd() * .18) : rnd() < .2 ? .75 : .97),
  full: n => wave(n, x => rnd() < .1 ? .8 : .99),
  fullTail: n => wave(n, x => x > 16 ? .35 * Math.exp(-(x - 16) * 5) + .03 : rnd() < .1 ? .85 : .99),
  hats: n => mid(n) + wave(n, x => { const k = Math.floor(x / .25), f = frac(x, .25); const p = k === 6 || k === 14 ? 1 : .5; return f > .25 && f < .7 ? p * (1 - Math.abs(f - .45) * 4) : .03; }, n * 35),
  kick: n => mid(n) + wave(n, x => { const r = n - x; if (n > 7 && r < .55 && r > .3) return .04; const f = frac(x, .25); return f < .1 ? .6 + f * 4 : f < .5 ? 1.05 - f * .4 : Math.max(.08, .85 - (f - .5) * 2.2); }, n * 70),
  loop: n => mid(n) + wave(n, x => { const f = frac(x + .25, .5), g = frac(x + .01, .5); return f < .35 ? .98 * (1 - f / .35) : g < .2 ? .5 * (1 - g / .2) : .06; }, n * 70),
  open: n => mid(n) + wave(n, x => (x < .15 ? x * 6 + .25 : Math.exp(-x * 1.1)) * (.35 + .65 * Math.abs(Math.cos(x * 12.5))) * (x > 2.6 ? .1 : 1), n * 35),
  swell: n => mid(n) + wave(n, (x, t) => (t < .7 ? Math.pow(t / .7, 2.3) * .85 : .88 - (t - .7) * 2.3) * (.9 + rnd() * .2)),
  rise: n => mid(n) + wave(n, (x, t) => t * .42 * (t > .85 ? 1.2 : .9)),
  hit: n => mid(n) + wave(n, x => .58 * Math.exp(-x * 2.8)),
  late: n => mid(n) + wave(n, (x, t) => t > .7 ? (t - .7) * 1.4 : .02),
  chime: n => mid(n) + wave(n, (x, t) => t < .2 ? .05 : t < .35 ? .18 + rnd() * .06 : .18 * (1 - t)),
  str: n => mid(n) + wave(n, x => .08 + rnd() * .1 + (frac(x, .7) < .2 ? .1 : 0)),
  vox: n => mid(n) + wave(n, x => (Math.sin(x * 5) + Math.sin(x * 13) > -.8 ? (rnd() < .35 ? .12 : .35 + rnd() * .3) : .05) * (rnd() < .05 ? 1.6 : 1), n * 18),
  tred: n => mid(n) + wave(n, (x, t) => t > .45 ? .28 : .02),
  tpur: n => wave(n, (x, t) => t < .7 ? 1 - t * 1.4 : .03)
};

/* ---------- clips: track, start bar, end bar, name, style, drawing ---------- */
const styles = {
  pat: ['#454e54','#a9b3b8','pat'], drum: ['#67525e','#c8b0ba','aud'], hat: ['#665154','#c6b0b2','aud'], loop: ['#4e5a66','#b2c2ca','aud'],
  open: ['#51626a','#b1c3c8','aud'], in: ['#674f63','#c8b0c3','aud'], hit: ['#506668','#b1c6c7','aud'], chime: ['#666250','#c8c4aa','aud'],
  red: ['#96292c','#f88080','tiny'], pur: ['#5b5369','#b8b1cb','tiny'], pk: ['#644f63','#c8b0c3','tiny'],
  ghost: ['#3a4753','#6f7d88','cut'], ghost2: ['#394850','#6f7f86','cut'],
  blue: ['#4b5479','#b9c6f0','autos'], vio: ['#584b78','#b3a5dc','autos'], mag: ['#774a6e','#e0aed0','autos']
};
const C = [];
const add = (t, a, b, name, st, draw) => C.push({t, a, b, name, st, draw});
const DJ = 'DJ阿智 – 逃去你的磁场Vol.114', CC = '阿福 – 擦擦 (2)', GZ = '阿福 – 鼓组', KT = '开头气氛音效3', JR = '进入气氛音效2', LP = 'LOOP-..鼓带镲片';
add(1,2,16,DJ,'ghost','full1'); add(1,17,33,DJ,'ghost','full'); add(1,33,50,DJ,'ghost','fullTail');
add(2,2,4,'Pa..n 7','pat','p7'); add(2,4,16,'Pattern 5','pat','p5');
[17,25,33,41].forEach(b => add(2,b,b+8,'Pattern 3','pat','p3')); [50,58].forEach(b => add(2,b,b+8,'Pattern 4','pat','p4'));
add(3,2,16,'Pattern 12','pat','p12'); [17,25].forEach(b => add(3,b,b+8,'Pattern 8','pat','p8'));
[33,41].forEach(b => add(3,b,b+8,'Pattern 10','pat','p10')); [50,58].forEach(b => add(3,b,b+8,'Pattern 11','pat','p10'));
add(4,2,8,'Pattern 2','pat','p2a'); add(4,8,16,'Pattern 2','pat','p2'); add(4,17,33,'Pattern 13','pat','p13'); add(4,33,49,'Pattern 13','pat','p13'); add(4,50,66,'Pattern 14','pat','p14');
add(5,24,25,'','pat','p18'); [25,33,41].forEach(b => add(5,b,b+8,'Pattern 19','pat','p19')); [50,58].forEach(b => add(5,b,b+8,'Pattern 20','pat','p20'));
[50,54,58,62].forEach(b => { add(6,b,b+4,'String','drum','str'); add(8,b,b+4,CC,'hat','hats'); });
[8,12].forEach(b => add(7,b,b+4,CC,'hat','hats'));
[[17,24.87],[25,32.87],[33,40.87],[41,49],[50,57.83],[58,66]].forEach(([a,b]) => add(7,a,b,GZ,'drum','kick')); add(7,66,66.12,'','drum','tpur');
[4,8,12].forEach(b => add(8,b,b+4,LP,'loop','loop')); add(8,16.73,17,'','red','tred');
[25,29,33,37,41,45].forEach(b => add(8,b,b+4,CC,'hat','hats'));
add(9,8,12,KT,'open','open'); add(9,12.27,16,JR,'in','swell'); add(9,16.73,17,'','pk','tpur');
[21.25,29.25,37.25,45.25,54.25,62.25].forEach(b => add(9,b,b+3.7,JR,'in','swell')); add(9,49.73,50,'','pk','tpur');
add(10,8,9.48,'单..','hit','hit'); [10,12,14,16,49,58,66].forEach(b => add(10,b,b+2,'单..3','hit','hit'));
[23.5,31.5,39.5,47.5,56.5,64.5].forEach(b => add(10,b,b+1.5,'..4','in','rise'));
[[7.76,8],[11.75,12]].forEach(([a,b]) => add(11,a,b,'','red','tred'));
[[8,8.25],[9.87,10.1],[12,12.2],[13.88,14.1]].forEach(([a,b]) => add(11,a,b,'','pur','tpur'));
add(11,15.26,16.73,'..','in','rise'); add(11,15.77,16,'','red','tred'); add(11,16,16.25,'','pur','tpur'); add(11,16.38,16.62,'','pur','tpur');
[17,25,33,41,50].forEach(b => add(11,b,b+1.97,'单..3','hit','hit'));
add(11,48.25,49.72,'..','in','rise'); add(11,49,49.25,'','pur','tpur'); add(11,49.37,49.62,'','pur','tpur'); add(11,66,69.96,KT,'open','open');
add(12,6.5,8,'..4','in','rise'); [[10.02,10.22],[14,14.25],[16.5,16.73],[49.5,49.72]].forEach(([a,b]) => add(12,a,b,'','pur','tpur'));
[16.12,24.74,32.74,40.74,49.1,49.73,57.73].forEach(b => add(12,b,b+.25,'','red','tred'));
[25,33,41,50,58].forEach(b => add(12,b,b+3.97,KT,'open','open'));
add(13,10,14,KT,'open','open'); add(13,14.5,16,'..4','in','rise'); add(13,17,21,KT,'open','open'); add(13,49,52.96,KT,'open','open');
add(14,7.07,10.05,'风铃声','chime','chime'); add(14,12,16,KT,'open','open'); add(14,16,20,KT,'open','open'); add(14,47.36,49.95,'Pattern 11','in','late');
add(15,14,18,KT,'open','open');
const KS = n => `Kickstart (Insert ${n}) – Mix level`;
/* automation: path in bars from clip start, y 0 (top) .. 1 */
add(16,1,68.95,KS(3),'blue','M0 1H16V0H48V1H49V0H66V1');
add(17,1,49,KS(1),'blue','M0 1H16V0H48'); add(17,50,68.95,KS(1),'blue','M0 1V0H17');
add(18,1,73.2,KS(8),'blue','M0 1H16.25V0H48V1H49V0H66V1H68');
add(19,25.24,49,'Fast LP – Insert 7 – Cutoff','vio','M0 1C.3 .3 .6 0 1 0H5C6.5 .1 7.2 .28 8 .28C8.5 .25 8.8 .1 9.1 .1H14C17 .1 19 .02 21 0C22 .1 23 .3 23.76 .55');
add(19,49,69.05,'Fast LP – Insert 7 – Cutoff','vio','M0 1C.1 .3 .4 0 1 0H9.5C13 0 16 .2 18 1');
add(21,1,17,'untitled – Filter 1 – Cutoff frequency','mag','M0 1H7C10 .98 13 .82 15 .75V1H16');
add(21,17,68.95,'untitled – Filter 1 – Cutoff frequency','mag','M0 1H8C12 1 15 .9 16 .72V1H22C28 .98 31 .8 32 .68V1H36C44 .98 47 .8 49 .53H52');
add(22,1,55.96,'Endless Smile 64 – Master – Intensit','vio','M0 1H8C12 .97 14 .8 15 .62V1H55');
add(23,7.98,15.92,'DJXB合成Vol.8','ghost2','vox'); add(23,16.75,33,'Dj78&DjKc&DjSs&DjXB&DjAx&Dj阿克扬 Vol.106','ghost','vox');
add(23,33,40.9,'2_DJ水果组合76 #2','ghost2','vox'); add(23,41,49,'- Be Some Fro..en (骞插０绱犳潗).mp3','ghost','vox');

function clipHtml(c) {
  const len = c.b - c.a, [bg, fg, icon] = styles[c.st];
  let inner, vb = `0 0 ${len*35} 29`;
  if (c.draw[0] === 'M') {
    vb = `0 -.06 ${len} 1.12`;
    inner = `<path d="${c.draw}V1H0z" fill="${fg}" opacity=".13" stroke="none"/><path d="${c.draw}" fill="none" stroke="${fg}" stroke-width="1" vector-effect="non-scaling-stroke"/>`;
  } else inner = (notes[c.draw] || waves[c.draw])(len);
  const sz = icon === 'autos' ? [16, 16] : icon === 'cut' ? [12, 14] : [13, 15];
  const ic = icon === 'tiny' ? '<svg width="5" height="12"><path fill="#fff" opacity=".25" d="M0 0l5 6-5 6z"/></svg>' : len < .2 ? '' : `<svg width="${sz[0]}" height="${sz[1]}"><use href="#${icon}"/></svg>`;
  const fit = c.name.length * 9 > len * 34.65 || c.name.endsWith('mp3');
  const name = c.name ? `<span class="clip-name${fit?' fit':''}">${esc(c.name)}</span>` : '';
  return `<div class="clip${c.st.startsWith('ghost')?' ghost':''}" style="left:${pct(c.a-1)};width:${pct(len)}"><div class="clip-head d-flex align-items-center" style="background-color:${bg}">${ic}${name}</div><svg class="body" viewBox="${vb}" preserveAspectRatio="none" fill="${fg}">${inner}</svg></div>`;
}
/* runs of quarter-bar volume envelopes */
const runs = [[8,1],[9.87,1],[10,1],[12,1],[13.87,1],[14,1],[17,128],[50,65]];
function runHtml([a, n]) {
  let head = '', body = '';
  for (let i = 0; i < n; i++) {
    head += `<rect x="${i*10+.5}" y="0" width="9" height="22" rx="2" fill="#845268" stroke="#5b3548"/><ellipse cx="${i*10+5}" cy="15" rx="2" ry="3" fill="none" stroke="#a37c90"/>`;
    body += `M${i*10} 6V28L${i*10+2} 27L${i*10+5} 8L${i*10+9} 6`;
  }
  return `<div class="clip" style="left:${pct(a-1)};width:${pct(n*.25)}"><svg width="100%" height="23" viewBox="0 0 ${n*10} 23" preserveAspectRatio="none">${head}</svg><svg class="body" viewBox="0 0 ${n*10} 29" preserveAspectRatio="none"><path d="${body}" fill="none" stroke="#e3b6ca" stroke-width="1" vector-effect="non-scaling-stroke"/></svg></div>`;
}

/* ---------- tracks ---------- */
let html = '';
for (let t = 1; t <= 36; t++) {
  const off = t === 1 || t === 23, auto = t >= 16 && t <= 22;
  const st = off ? '<svg class="st" width="16" height="22" style="color:#687379"><use href="#lock"/></svg>'
    : auto ? '<svg class="st" width="16" height="22" style="color:#7fd326"><use href="#lock"/></svg>'
    : '<svg class="st" width="18" height="20"><use href="#led"/></svg>';
  const clips = C.filter(c => c.t === t).map(clipHtml).join('') + (t === 20 ? runs.map(runHtml).join('') : '');
  html += `<div class="trk d-flex"><div class="trk-head${off?' off':t>23?' idle':''}">Track ${t}<svg class="dots" width="16" height="3" fill="#30383d"><path d="M0 0h3v3H0zM6 0h3v3H6zM12 0h3v3h-3z"/></svg>${st}</div><div class="lead-in${t===15?' mark':''}"></div><div class="lane flex-grow-1">${clips}</div></div>`;
}
document.getElementById('tracks').insertAdjacentHTML('beforeend', html + `<div class="playhead" style="left:calc(166px + (100% - 166px) * ${(46.74/BARS).toFixed(4)})"></div>`);

/* ---------- grid, ruler, overview ---------- */
let g = '';
for (let b = 0; b < 75; b += 4) g += `<rect x="${b*10}" width="40" height="1944" fill="${b % 8 ? '#2d3c46' : '#33434c'}"/>`;
for (let h = 0; h < 150; h++) g += `<path d="M${h*5} 0V1944" stroke="${h % 2 ? '#263640' : '#15242d'}" vector-effect="non-scaling-stroke"/>`;
document.getElementById('grid').innerHTML = g;
let rl = '';
for (let b = 1; b <= 75; b += 2) rl += `<span class="${b % 4 === 1 ? 'major' : ''}" style="left:${pct(b-1)}">${b}</span>`;
rl += `<svg style="position:absolute;top:0;left:calc(${pct(46.74)} - 11px)" width="22" height="16" viewBox="0 0 22 16"><path fill="#a9dd58" stroke="#e9ffb8" d="M1 1h20l-2 6-8 8-8-8z"/></svg>`;
document.getElementById('ruler').innerHTML = rl;
const all = C.concat(runs.map(([a, n]) => ({t: 20, a, b: a + n * .25, st: 'mag'})));
document.getElementById('overview').innerHTML = all.map(c => {
  const col = {pat:'#6b8084', ghost:'#8a7a9a', ghost2:'#88936f', drum:'#94707c', hat:'#94707c', red:'#d8474a', blue:'#6a76a4', vio:'#7568a4', mag:'#9a6a9a', chime:'#8a8a70'}[c.st] || (c.st === 'in' ? '#8e7088' : '#728a92');
  return `<rect x="${(c.a-1)*10}" y="${1+c.t*1.1}" width="${(c.b-c.a)*10}" height="1.4" fill="${col}"/>`;
}).join('');

/* ---------- pattern picker ---------- */
const pv = {2:'p2',3:'p3',4:'p4',5:'p5',6:'p5',7:'p7',8:'p8',9:'p7',10:'p10',11:'p10',12:'p12',13:'p13',14:'p14',15:'p5',16:'p13',17:'p3',18:'p18',19:'p19',20:'p20'};
let pl = '';
for (let i = 1; i <= 21; i++) {
  const wide = i === 12 || i === 14 ? 14 : 8;
  pl += `<button class="pat-item position-relative d-flex align-items-center${i===11?' sel':''}"><svg class="pv" viewBox="0 0 ${wide*35} 29" preserveAspectRatio="none" fill="currentColor">${pv[i] ? notes[pv[i]](8) : ''}</svg><svg width="13" height="15"><use href="#pat"/></svg><span>Pattern ${i}</span>${i===11?'<svg style="position:absolute;left:0;top:8px" width="10" height="18"><path fill="#f0455a" d="M0 0l10 9-10 9z"/></svg>':''}</button>`;
}
document.getElementById('patterns').innerHTML = pl;
</script>
</body>
</html>
